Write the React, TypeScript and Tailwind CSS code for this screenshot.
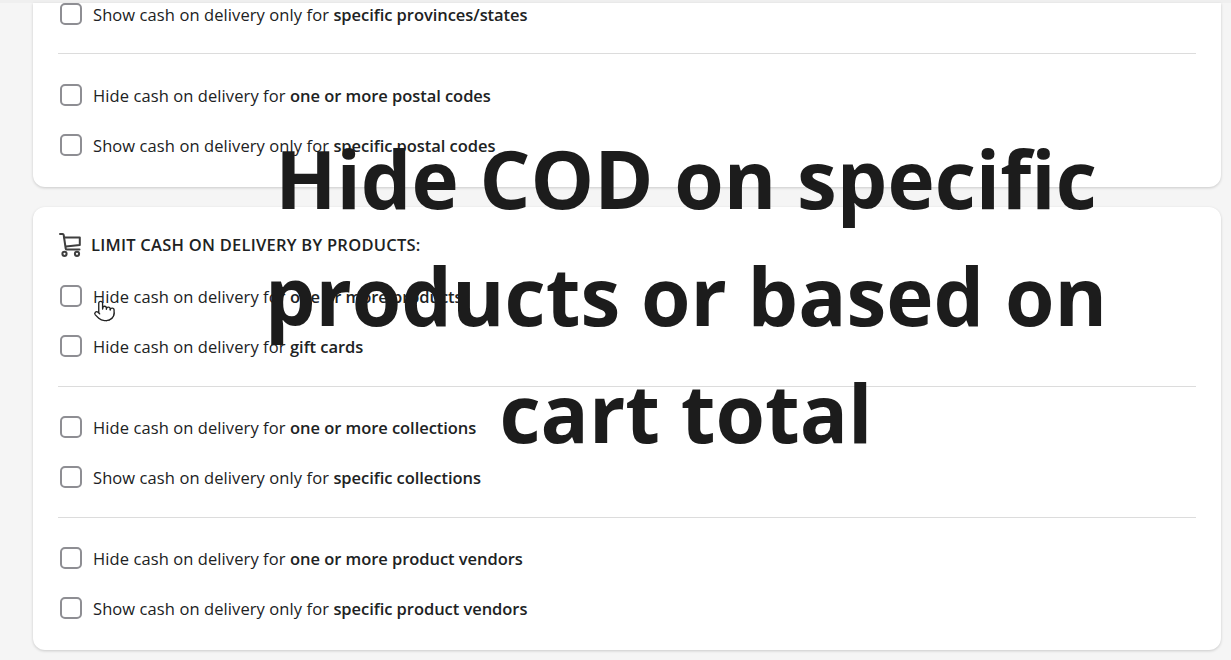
import { Pointer } from "lucide-react";

function Check({ children }: { children: React.ReactNode }) {
  return (
    <label className="flex h-[50px] items-center pl-[27px]">
      <span className="h-[22px] w-[22px] shrink-0 rounded-[5px] border-2 border-[#8e8e93] bg-white" />
      <span className="ml-[11px] pt-[2px] text-[16.5px] tracking-[0.09px] text-[#202223]">{children}</span>
    </label>
  );
}

function Strong({ children }: { children: React.ReactNode }) {
  return <b className="font-semibold tracking-[-0.05px]">{children}</b>;
}

function Divider() {
  return <div className="my-[15px] mx-[25px] h-px bg-[#dcdcdc]" />;
}

function CartIcon() {
  return (
    <svg width="22" height="24" viewBox="0 0 22 24" fill="none" stroke="#3f3f3f" strokeWidth="2" strokeLinecap="round" strokeLinejoin="round">
      <path d="M1 1h2.600c.6 0 1 .4 1.100 1l2 13.500c.1.600.5 1 1.100 1H20.500" />
      <path d="M5 4.500H20.800v7.500L7 13.500" />
      <circle cx="5.500" cy="20.800" r="2.100" />
      <circle cx="18" cy="20.800" r="2.100" />
    </svg>
  );
}

export default function App() {
  return (
    <div className="relative h-[660px] w-[1231px] overflow-hidden bg-[#f5f5f5] font-['Open_Sans',sans-serif]">
      <div className="h-[3px] bg-[#efefef]" />
      <div className="ml-[33px] w-[1188px]">
        <section className="h-[184px] overflow-hidden rounded-b-xl bg-white shadow-[0_1px_3px_rgba(0,0,0,0.18)]">
          <div className="-mt-[14px]">
            <Check>Show cash on delivery only for <Strong>specific provinces/states</Strong></Check>
          </div>
          <div className="mb-4 mt-[14px] mx-[25px] h-px bg-[#dcdcdc]" />
          <Check>Hide cash on delivery for <Strong>one or more postal codes</Strong></Check>
          <Check>Show cash on delivery only for <Strong>specific postal codes</Strong></Check>
        </section>
        <section className="mt-5 rounded-xl bg-white pb-[17px] pt-[26px] shadow-[0_1px_3px_rgba(0,0,0,0.18)]">
          <div className="mb-[14px] flex h-6 items-center gap-[10px] pl-[26px]">
            <CartIcon />
            <h2 className="text-[16.5px] font-semibold uppercase tracking-[0.25px] text-[#202223]">Limit cash on delivery by products:</h2>
          </div>
          <Check>Hide cash on delivery for <Strong>one or more products</Strong></Check>
          <Check>Hide cash on delivery for <Strong>gift cards</Strong></Check>
          <Divider />
          <Check>Hide cash on delivery for <Strong>one or more collections</Strong></Check>
          <Check>Show cash on delivery only for <Strong>specific collections</Strong></Check>
          <Divider />
          <Check>Hide cash on delivery for <Strong>one or more product vendors</Strong></Check>
          <Check>Show cash on delivery only for <Strong>specific product vendors</Strong></Check>
        </section>
      </div>
      <div className="absolute left-[240px] top-[119px] w-[892px] text-center text-[80px] font-bold leading-[117px] text-[#1c1c1c]">
        Hide COD on specific products or based on cart total
      </div>
      <Pointer className="absolute left-[93px] top-[297px] h-[28px] w-[23px] fill-white text-[#222]" strokeWidth={1.4} />
    </div>
  );
}
